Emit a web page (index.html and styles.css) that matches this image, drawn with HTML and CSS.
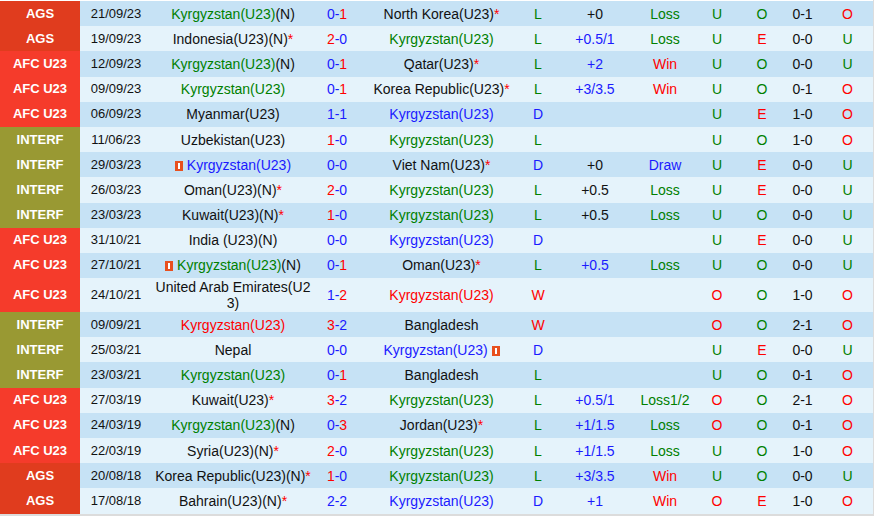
FILE: index.html
```html
<!DOCTYPE html>
<html>
<head>
<meta charset="utf-8">
<link rel="stylesheet" href="styles.css">
</head>
<body>
<div class="wrap">
<table class="t">
<colgroup>
<col class="c1"><col class="c2"><col class="c3"><col class="c4"><col class="c5"><col class="c6"><col class="c7"><col class="c8"><col class="c9"><col class="c10"><col class="c11"><col class="c12">
</colgroup>
<tbody>
<tr class="d"><td class="lg ags">AGS</td><td class="dt">21/09/23</td><td><span class="g">Kyrgyzstan(U23)</span>(N)</td><td><span class="b">0-</span><span class="r">1</span></td><td>North Korea(U23)<span class="r">*</span></td><td class="g">L</td><td>+0</td><td class="g">Loss</td><td class="g">U</td><td class="g">O</td><td>0-1</td><td class="r">O</td></tr>
<tr class="l"><td class="lg ags">AGS</td><td class="dt">19/09/23</td><td>Indonesia(U23)(N)<span class="r">*</span></td><td><span class="r">2</span><span class="b">-0</span></td><td class="g">Kyrgyzstan(U23)</td><td class="g">L</td><td class="b">+0.5/1</td><td class="g">Loss</td><td class="g">U</td><td class="r">E</td><td>0-0</td><td class="g">U</td></tr>
<tr class="d"><td class="lg afc">AFC U23</td><td class="dt">12/09/23</td><td><span class="g">Kyrgyzstan(U23)</span>(N)</td><td><span class="b">0-</span><span class="r">1</span></td><td>Qatar(U23)<span class="r">*</span></td><td class="g">L</td><td class="b">+2</td><td class="r">Win</td><td class="g">U</td><td class="g">O</td><td>0-0</td><td class="g">U</td></tr>
<tr class="l"><td class="lg afc">AFC U23</td><td class="dt">09/09/23</td><td class="g">Kyrgyzstan(U23)</td><td><span class="b">0-</span><span class="r">1</span></td><td>Korea Republic(U23)<span class="r">*</span></td><td class="g">L</td><td class="b">+3/3.5</td><td class="r">Win</td><td class="g">U</td><td class="g">O</td><td>0-1</td><td class="r">O</td></tr>
<tr class="d"><td class="lg afc">AFC U23</td><td class="dt">06/09/23</td><td>Myanmar(U23)</td><td class="b">1-1</td><td class="b">Kyrgyzstan(U23)</td><td class="b">D</td><td></td><td></td><td class="g">U</td><td class="r">E</td><td>1-0</td><td class="r">O</td></tr>
<tr class="l"><td class="lg itf">INTERF</td><td class="dt">11/06/23</td><td>Uzbekistan(U23)</td><td><span class="r">1</span><span class="b">-0</span></td><td class="g">Kyrgyzstan(U23)</td><td class="g">L</td><td></td><td></td><td class="g">U</td><td class="g">O</td><td>1-0</td><td class="r">O</td></tr>
<tr class="d"><td class="lg itf">INTERF</td><td class="dt">29/03/23</td><td><span class="card"></span> <span class="b">Kyrgyzstan(U23)</span></td><td class="b">0-0</td><td>Viet Nam(U23)<span class="r">*</span></td><td class="b">D</td><td>+0</td><td class="b">Draw</td><td class="g">U</td><td class="r">E</td><td>0-0</td><td class="g">U</td></tr>
<tr class="l"><td class="lg itf">INTERF</td><td class="dt">26/03/23</td><td>Oman(U23)(N)<span class="r">*</span></td><td><span class="r">2</span><span class="b">-0</span></td><td class="g">Kyrgyzstan(U23)</td><td class="g">L</td><td>+0.5</td><td class="g">Loss</td><td class="g">U</td><td class="r">E</td><td>0-0</td><td class="g">U</td></tr>
<tr class="d"><td class="lg itf">INTERF</td><td class="dt">23/03/23</td><td>Kuwait(U23)(N)<span class="r">*</span></td><td><span class="r">1</span><span class="b">-0</span></td><td class="g">Kyrgyzstan(U23)</td><td class="g">L</td><td>+0.5</td><td class="g">Loss</td><td class="g">U</td><td class="g">O</td><td>0-0</td><td class="g">U</td></tr>
<tr class="l"><td class="lg afc">AFC U23</td><td class="dt">31/10/21</td><td>India (U23)(N)</td><td class="b">0-0</td><td class="b">Kyrgyzstan(U23)</td><td class="b">D</td><td></td><td></td><td class="g">U</td><td class="r">E</td><td>0-0</td><td class="g">U</td></tr>
<tr class="d"><td class="lg afc">AFC U23</td><td class="dt">27/10/21</td><td><span class="card"></span> <span class="g">Kyrgyzstan(U23)</span>(N)</td><td><span class="b">0-</span><span class="r">1</span></td><td>Oman(U23)<span class="r">*</span></td><td class="g">L</td><td class="b">+0.5</td><td class="g">Loss</td><td class="g">U</td><td class="g">O</td><td>0-0</td><td class="g">U</td></tr>
<tr class="l tall"><td class="lg afc">AFC U23</td><td class="dt">24/10/21</td><td class="brk">United Arab Emirates(U23)</td><td><span class="b">1-</span><span class="r">2</span></td><td class="r">Kyrgyzstan(U23)</td><td class="r">W</td><td></td><td></td><td class="r">O</td><td class="g">O</td><td>1-0</td><td class="r">O</td></tr>
<tr class="d"><td class="lg itf">INTERF</td><td class="dt">09/09/21</td><td class="r">Kyrgyzstan(U23)</td><td><span class="r">3</span><span class="b">-2</span></td><td>Bangladesh</td><td class="r">W</td><td></td><td></td><td class="r">O</td><td class="g">O</td><td>2-1</td><td class="r">O</td></tr>
<tr class="l"><td class="lg itf">INTERF</td><td class="dt">25/03/21</td><td>Nepal</td><td class="b">0-0</td><td><span class="b">Kyrgyzstan(U23)</span> <span class="card"></span></td><td class="b">D</td><td></td><td></td><td class="g">U</td><td class="r">E</td><td>0-0</td><td class="g">U</td></tr>
<tr class="d"><td class="lg itf">INTERF</td><td class="dt">23/03/21</td><td class="g">Kyrgyzstan(U23)</td><td><span class="b">0-</span><span class="r">1</span></td><td>Bangladesh</td><td class="g">L</td><td></td><td></td><td class="g">U</td><td class="g">O</td><td>0-1</td><td class="r">O</td></tr>
<tr class="l"><td class="lg afc">AFC U23</td><td class="dt">27/03/19</td><td>Kuwait(U23)<span class="r">*</span></td><td><span class="r">3</span><span class="b">-2</span></td><td class="g">Kyrgyzstan(U23)</td><td class="g">L</td><td class="b">+0.5/1</td><td class="g">Loss1/2</td><td class="r">O</td><td class="g">O</td><td>2-1</td><td class="r">O</td></tr>
<tr class="d"><td class="lg afc">AFC U23</td><td class="dt">24/03/19</td><td><span class="g">Kyrgyzstan(U23)</span>(N)</td><td><span class="b">0-</span><span class="r">3</span></td><td>Jordan(U23)<span class="r">*</span></td><td class="g">L</td><td class="b">+1/1.5</td><td class="g">Loss</td><td class="r">O</td><td class="g">O</td><td>0-1</td><td class="r">O</td></tr>
<tr class="l"><td class="lg afc">AFC U23</td><td class="dt">22/03/19</td><td>Syria(U23)(N)<span class="r">*</span></td><td><span class="r">2</span><span class="b">-0</span></td><td class="g">Kyrgyzstan(U23)</td><td class="g">L</td><td class="b">+1/1.5</td><td class="g">Loss</td><td class="g">U</td><td class="g">O</td><td>1-0</td><td class="r">O</td></tr>
<tr class="d"><td class="lg ags">AGS</td><td class="dt">20/08/18</td><td>Korea Republic(U23)(N)<span class="r">*</span></td><td><span class="r">1</span><span class="b">-0</span></td><td class="g">Kyrgyzstan(U23)</td><td class="g">L</td><td class="b">+3/3.5</td><td class="r">Win</td><td class="g">U</td><td class="g">O</td><td>0-0</td><td class="g">U</td></tr>
<tr class="l"><td class="lg ags">AGS</td><td class="dt">17/08/18</td><td>Bahrain(U23)(N)<span class="r">*</span></td><td class="b">2-2</td><td class="b">Kyrgyzstan(U23)</td><td class="b">D</td><td class="b">+1</td><td class="r">Win</td><td class="r">O</td><td class="r">E</td><td>1-0</td><td class="r">O</td></tr>
</tbody>
</table>
</div>
</body>
</html>
```

FILE: styles.css
```css
html, body {
  margin: 0;
  padding: 0;
  background: #ffffff;
}
.wrap {
  width: 873px;
  border-right: 1px solid #dcdcdc;
  border-bottom: 2px solid #dcdcdc;
  padding-top: 1px;
}
.t {
  width: 873px;
  border-collapse: collapse;
  table-layout: fixed;
  font-family: "Liberation Sans", Arial, sans-serif;
  font-size: 14px;
  line-height: 16px;
  color: #111;
}
.c1 { width: 80px; }
.c2 { width: 72px; }
.c3 { width: 162px; }
.c4 { width: 46px; }
.c5 { width: 163px; }
.c6 { width: 30px; }
.c7 { width: 84px; }
.c8 { width: 56px; }
.c9 { width: 48px; }
.c10 { width: 42px; }
.c11 { width: 39px; }
.c12 { width: 51px; }
.t td {
  height: 25.2px;
  padding: 0 2px;
  text-align: center;
  vertical-align: middle;
  white-space: nowrap;
  box-sizing: border-box;
}
.t tr.tall td {
  height: 34px;
}
.t td.brk {
  white-space: normal;
  word-break: break-all;
}
.t td.dt {
  font-size: 13px;
}
tr.d { background: #c6e2f5; }
tr.l { background: #e5f3fb; }
.t td.lg {
  color: #ffffff;
  font-weight: bold;
  font-size: 13px;
}
.t td.ags { background: #e03c1e; }
.t td.afc { background: #f53b2b; }
.t td.itf { background: #999933; }
.g { color: #008000; }
.b { color: #1a1aff; }
.r { color: #ff0000; }
.card {
  display: inline-block;
  width: 8px;
  height: 10px;
  background: #e8501e;
  position: relative;
  vertical-align: -1px;
}
.card::after {
  content: "";
  position: absolute;
  left: 3px;
  top: 2px;
  width: 2px;
  height: 6px;
  background: #ffffff;
}
```
